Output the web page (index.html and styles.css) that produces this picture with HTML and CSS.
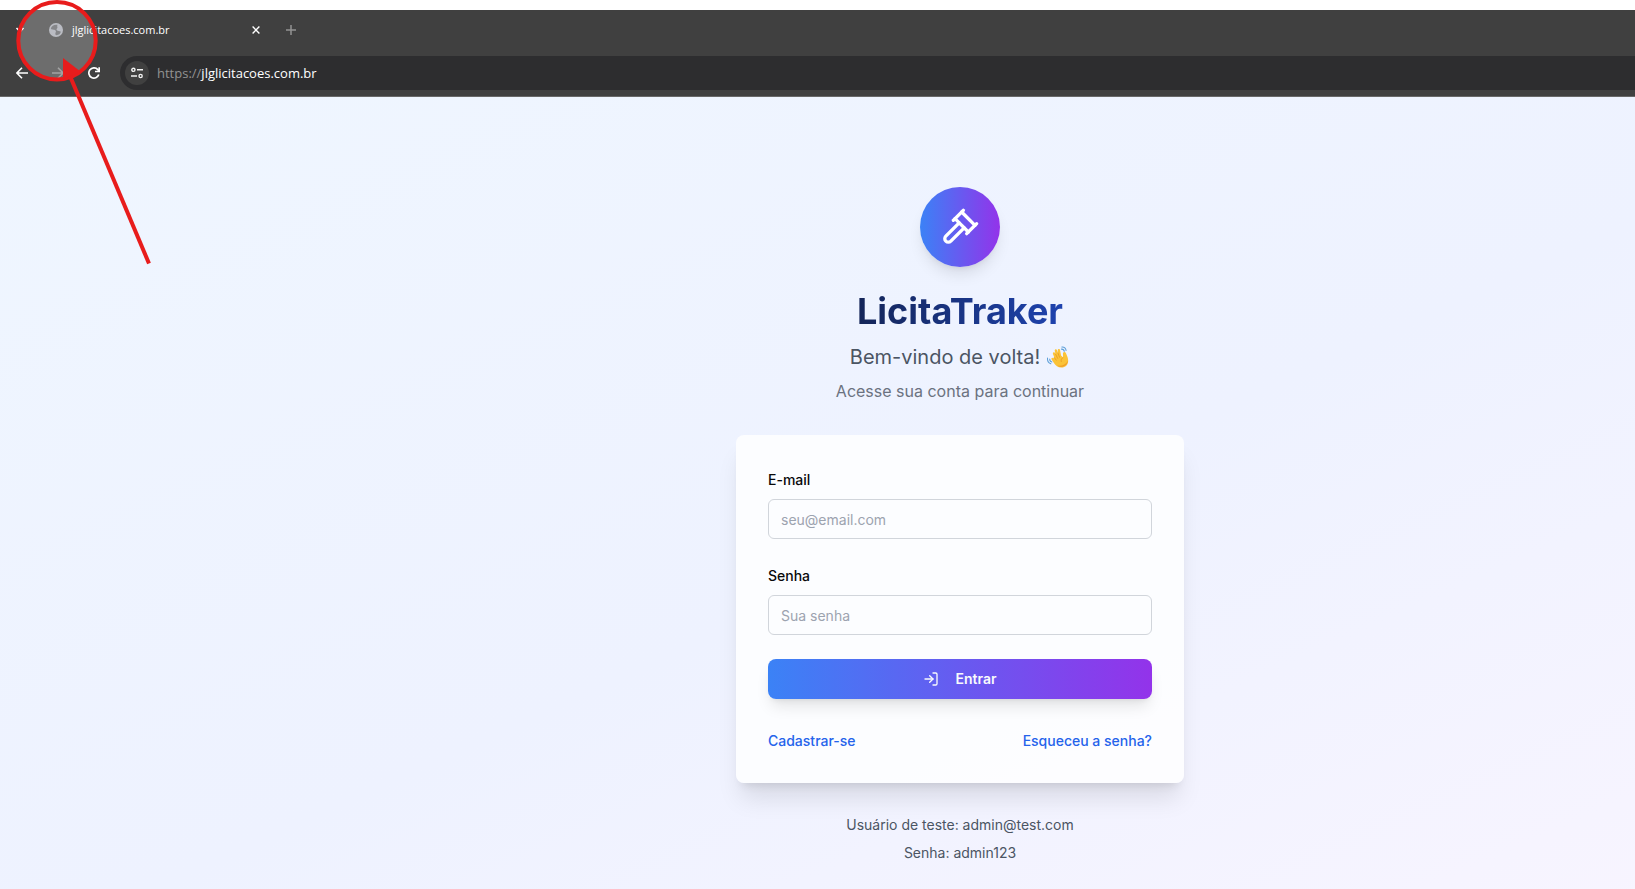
FILE: index.html
```html
<!DOCTYPE html>
<html lang="pt-BR">
<head>
<meta charset="utf-8">
<title>LicitaTraker</title>
<link rel="stylesheet" href="styles.css">
</head>
<body>
<div class="screen">
  <header class="browser">
    <div class="tabs">
      <button class="icon-btn tab-search" aria-label="Pesquisar guias">
        <svg width="10" height="10" viewBox="0 0 10 10" fill="none" stroke="#fff" stroke-width="1.6"><path d="M1.5 3 5 6.5 8.5 3"/></svg>
      </button>
      <div class="tab">
        <svg width="14" height="14" viewBox="0 0 14 14"><circle cx="7" cy="7" r="7" fill="#a5a8b0"/><path d="M1.800 5.500C3 7.400 5.200 6.200 6.500 7.500c1.300 1.500-1 2.500.3 4.600 2.600.3 4.500-1.200 5.100-3.300-1.300-1.600-3.200-.4-4.200-1.900-.8-1.300 1.200-1.500.7-3C7.900 2.800 8.600 2.500 8.400 1.800 5.500 1.100 2.600 2.700 1.800 5.500Z" fill="#5f6165"/></svg>
        <span class="tab-title">jlglicitacoes.com.br</span>
        <button class="icon-btn" aria-label="Fechar guia">
          <svg width="8" height="8" viewBox="0 0 8 8" stroke="#fff" stroke-width="1.400"><path d="m.6.6 6.800 6.800M7.400.6.6 7.400"/></svg>
        </button>
      </div>
      <button class="icon-btn" aria-label="Nova guia">
        <svg width="10" height="10" viewBox="0 0 10 10" stroke="#929292" stroke-width="1.500"><path d="M5 0v10M0 5h10"/></svg>
      </button>
    </div>
    <div class="toolbar">
      <nav class="nav-buttons">
        <button class="icon-btn" aria-label="Voltar">
          <svg width="12" height="12" viewBox="0 0 12 12" fill="none" stroke="#fff" stroke-width="1.600"><path d="M12 6H1M6 .8.9 6 6 11.200"/></svg>
        </button>
        <button class="icon-btn" aria-label="Avançar">
          <svg width="12" height="12" viewBox="0 0 12 12" fill="none" stroke="#858585" stroke-width="1.600"><path d="M0 6h11M6 .8 11.100 6 6 11.200"/></svg>
        </button>
        <button class="icon-btn" aria-label="Recarregar">
          <svg width="12" height="12" viewBox="0 0 12 12" fill="none" stroke="#fff" stroke-width="1.700"><path d="M10.800 7.500A5.100 5.100 0 1 1 9.800 2.600L11 4"/><path d="M11.200.2v4.300H7"/></svg>
        </button>
      </nav>
      <div class="address">
        <button class="icon-btn site-info" aria-label="Informações do site">
          <svg width="12" height="12" viewBox="0 0 12 12" fill="none" stroke="#f2f2f2" stroke-width="1.400"><circle cx="2.400" cy="2.800" r="1.600"/><path d="M6 2.800h6M0 9h6"/><circle cx="9.600" cy="9" r="1.600"/></svg>
        </button>
        <p class="url"><span>https://</span>jlglicitacoes.com.br</p>
      </div>
    </div>
  </header>

  <main class="page">
    <div class="login">
      <div class="logo">
        <svg width="40" height="40" viewBox="0 0 24 24" fill="none" stroke="#fff" stroke-width="2" stroke-linecap="round" stroke-linejoin="round"><path d="m14.500 12.500-8 8a2.119 2.119 0 1 1-3-3l8-8"/><path d="m16 16 6-6"/><path d="m8 8 6-6"/><path d="m9 7 8 8"/><path d="m21 11-8-8"/></svg>
      </div>
      <h1>LicitaTraker</h1>
      <p class="welcome">Bem-vindo de volta!
        <svg class="wave" width="24" height="22" viewBox="-1 -1 22 21" role="img" aria-label="Mão acenando"><path d="M6.500 10 5.200 6.700c-.5-1.600 1.400-2.300 2-.9l.5 1-.8-3.100c-.3-1.700 1.700-2.200 2.200-.6l.9 2.700-.2-2.700c0-1.600 2-1.700 2.200-.1l.9 5 2 1.900-.2-3.500c0-1.800 2.100-2.300 2.800-.7.7 1.900 2.100 4 2.200 6.800.2 4.600-2.900 6.900-6.200 7-3.500.1-5.800-1.700-7.400-4.300L3.900 12c-.8-1.500.8-2.400 1.700-1.200Z" fill="#fbc337"/><path d="m7.700 6.800 2 4M10 5.800l1.500 4M6.500 10l1.800 2.500M14.900 9.900c-1.600.9-2.200 2.300-1.800 3.900" fill="none" stroke="#e89b22" stroke-width=".8" stroke-linecap="round"/><path d="M19.300 13c-.1 4.600-5.800 7.700-10.200 4.500 4 1.100 8.500-.4 10.200-4.500Z" fill="#f09c28"/><path d="M13.300 2c1.500-.1 2.500.8 2.700 2.100M13.700 0c2.300-.1 3.700 1.100 4 3.200M2.100 11.400c-.1 1.400.7 2.500 2 2.900M0 10.400c-.3 2.600.9 4.700 3.100 5.500" fill="none" stroke="#5d9fd8" stroke-width="1" stroke-linecap="round"/></svg>
      </p>
      <p class="hint">Acesse sua conta para continuar</p>

      <form class="card">
        <div class="field">
          <label for="email">E-mail</label>
          <input id="email" type="email" placeholder="seu@email.com">
        </div>
        <div class="field">
          <label for="password">Senha</label>
          <input id="password" type="password" placeholder="Sua senha">
        </div>
        <button class="submit" type="button">
          <svg width="16" height="16" viewBox="0 0 24 24" fill="none" stroke="currentColor" stroke-width="2" stroke-linecap="round" stroke-linejoin="round"><path d="M15 3h4a2 2 0 0 1 2 2v14a2 2 0 0 1-2 2h-4"/><path d="m10 17 5-5-5-5"/><path d="M15 12H3"/></svg>
          Entrar
        </button>
        <div class="links"><a href="#cadastro">Cadastrar-se</a><a href="#senha">Esqueceu a senha?</a></div>
      </form>

      <div class="test-user">
        <p>Usuário de teste: admin@test.com</p>
        <p>Senha: admin123</p>
      </div>
    </div>
  </main>

  <svg class="annotation" width="160" height="270" viewBox="0 0 160 270" aria-hidden="true">
    <circle cx="57" cy="40.700" r="38.700" fill="#fff" fill-opacity=".24" stroke="#e81c1c" stroke-width="4"/>
    <path d="M70 76 149 263.500" stroke="#e81c1c" stroke-width="4"/>
    <path d="M63 58 80.500 71.500 63 79.500Z" fill="#e81c1c"/>
  </svg>
</div>
</body>
</html>
```

FILE: styles.css
```css
* {
  box-sizing: border-box;
}

body,
h1,
p {
  margin: 0;
}

body {
  font-family: Inter, "Liberation Sans", sans-serif;
  font-size: 14px;
  line-height: 20px;
  color: #4b5563;
}

button,
input {
  font: inherit;
}

svg {
  display: block;
  flex: none;
}

.screen {
  position: relative;
  display: flex;
  flex-direction: column;
  min-height: 100vh;
  padding-top: 10px;
  overflow: hidden;
  background: #fff;
}

/* Browser window */
.browser {
  border-bottom: 1px solid #686868;
  background: #404040;
  color: #fff;
  font-family: "Open Sans", "Noto Sans", sans-serif;
}

.icon-btn {
  display: flex;
  align-items: center;
  justify-content: center;
  padding: 0;
  border: 0;
  background: none;
}

.tabs {
  display: flex;
  align-items: center;
  gap: 26px;
  height: 40px;
  padding-left: 15px;
}

.tab {
  display: flex;
  align-items: center;
  gap: 9px;
  width: 211px;
  font-size: 11px;
}

.tab-search {
  margin-right: -2px;
}

.tab-title {
  flex: 1;
}

.toolbar {
  display: flex;
  align-items: center;
  gap: 20px;
  padding: 6px 0 6px 16px;
}

.nav-buttons {
  display: flex;
  gap: 24px;
}

.address {
  display: flex;
  flex: 1;
  align-items: center;
  gap: 8px;
  height: 34px;
  padding-left: 5px;
  border-radius: 17px 0 0 17px;
  background: #2d2d2f;
}

.site-info {
  width: 24px;
  height: 24px;
  border-radius: 50%;
  background: #404040;
}

.url {
  font-size: 13px;
}

.url span {
  color: #929292;
}

/* Login page */
.page {
  display: flex;
  flex: 1;
  justify-content: center;
  padding: 90px 0 24px 285px;
  background: linear-gradient(to bottom right, #eff6ff, #eef2ff, #faf5ff) 0 0 / calc(100% + 285px) calc(100% + 68px);
}

.login {
  width: 448px;
  text-align: center;
}

.logo {
  display: flex;
  align-items: center;
  justify-content: center;
  width: 80px;
  height: 80px;
  margin: 0 auto 24px;
  border-radius: 50%;
  background: linear-gradient(to right, #3b82f6, #9333ea);
  box-shadow: 0 10px 15px -3px rgba(0, 0, 0, 0.1), 0 4px 6px -4px rgba(0, 0, 0, 0.1);
}

h1 {
  width: fit-content;
  margin: 0 auto 12px;
  background: linear-gradient(to right, #142558, #1e43af);
  background-clip: text;
  color: transparent;
  font-size: 36px;
  font-weight: 700;
  line-height: 40px;
}

.welcome {
  display: flex;
  align-items: center;
  justify-content: center;
  gap: 6px;
  margin-bottom: 8px;
  font-size: 20px;
  line-height: 28px;
}

.hint {
  color: #6b7280;
  font-size: 16px;
  line-height: 24px;
}

.card {
  display: flex;
  flex-direction: column;
  gap: 24px;
  margin-top: 32px;
  padding: 32px;
  border-radius: 8px;
  background: rgba(255, 255, 255, 0.8);
  box-shadow: 0 20px 25px -5px rgba(0, 0, 0, 0.1), 0 8px 10px -6px rgba(0, 0, 0, 0.1);
  text-align: left;
}

.field {
  display: flex;
  flex-direction: column;
  gap: 8px;
}

.field label {
  padding-top: 2px;
  color: #09090b;
  font-weight: 500;
  line-height: 22px;
}

.field input {
  width: 100%;
  height: 40px;
  padding: 0 12px;
  border: 1px solid #d1d5db;
  border-radius: 6px;
  background: transparent;
  color: #09090b;
}

.field input::placeholder {
  color: #9ca3af;
}

.submit {
  display: flex;
  align-items: center;
  justify-content: center;
  gap: 16px;
  height: 40px;
  border: 0;
  border-radius: 8px;
  background: linear-gradient(to right, #3b82f6, #9333ea);
  box-shadow: 0 10px 15px -3px rgba(0, 0, 0, 0.1), 0 4px 6px -4px rgba(0, 0, 0, 0.1);
  color: #f8fafc;
  font-weight: 600;
}

.links {
  display: flex;
  justify-content: space-between;
  margin-top: 8px;
}

.links a {
  color: #2563eb;
  font-weight: 500;
  text-decoration: none;
}

.test-user {
  display: flex;
  flex-direction: column;
  gap: 8px;
  margin-top: 32px;
}

/* Highlight drawn over the window */
.annotation {
  position: absolute;
  top: 0;
  left: 0;
  pointer-events: none;
}
```
